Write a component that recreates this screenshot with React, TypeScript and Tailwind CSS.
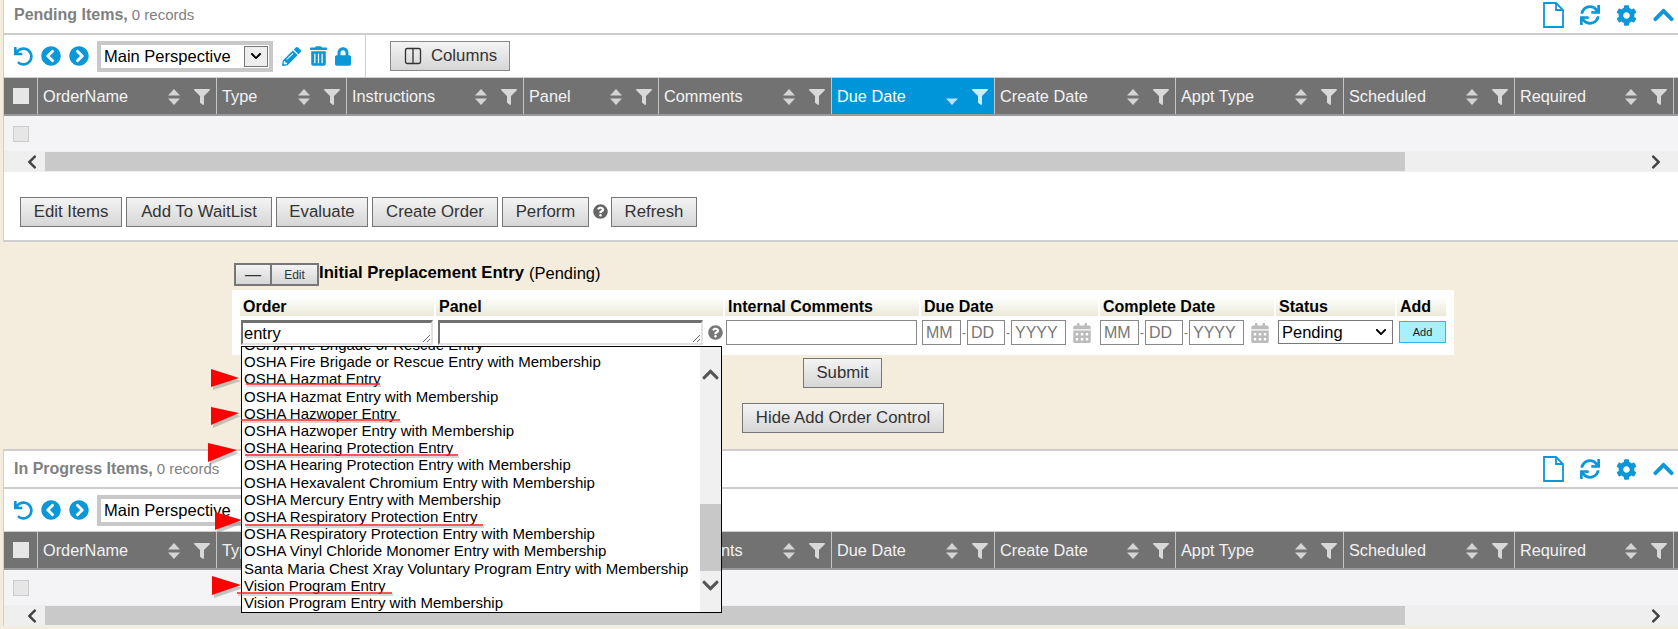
import { Columns2 } from 'lucide-react'
import {
  FaCalendarAlt,
  FaChevronCircleLeft,
  FaChevronCircleRight,
  FaChevronDown,
  FaChevronLeft,
  FaChevronRight,
  FaChevronUp,
  FaCog,
  FaFilter,
  FaLock,
  FaPencilAlt,
  FaQuestionCircle,
  FaSync,
  FaTrashAlt,
  FaUndo,
} from 'react-icons/fa'

const btn = 'h-[30px] border border-[#777] bg-gradient-to-b from-[#f4f4f4] to-[#d6d6d6] text-[16.8px] text-[#333] whitespace-nowrap flex items-center justify-center'

const columns = [
  { name: 'OrderName', w: 'w-[179px]' },
  { name: 'Type', w: 'w-[130px]' },
  { name: 'Instructions', w: 'w-[177px]' },
  { name: 'Panel', w: 'w-[135px]' },
  { name: 'Comments', w: 'w-[173px]' },
  { name: 'Due Date', w: 'w-[163px]' },
  { name: 'Create Date', w: 'w-[181px]' },
  { name: 'Appt Type', w: 'w-[168px]' },
  { name: 'Scheduled', w: 'w-[171px]' },
  { name: 'Required', w: 'w-[159px]' },
]

const options = [
  'OSHA Fire Brigade or Rescue Entry',
  'OSHA Fire Brigade or Rescue Entry with Membership',
  'OSHA Hazmat Entry',
  'OSHA Hazmat Entry with Membership',
  'OSHA Hazwoper Entry',
  'OSHA Hazwoper Entry with Membership',
  'OSHA Hearing Protection Entry',
  'OSHA Hearing Protection Entry with Membership',
  'OSHA Hexavalent Chromium Entry with Membership',
  'OSHA Mercury Entry with Membership',
  'OSHA Respiratory Protection Entry',
  'OSHA Respiratory Protection Entry with Membership',
  'OSHA Vinyl Chloride Monomer Entry with Membership',
  'Santa Maria Chest Xray Voluntary Program Entry with Membership',
  'Vision Program Entry',
  'Vision Program Entry with Membership',
]

function SortIcon({ active }: { active: boolean }) {
  return (
    <svg viewBox="0 0 12 16" className="w-3 h-4 shrink-0">
      {!active && <path d="M6 0 L12 6.5 H0 Z" fill="#d4d4d4" />}
      <path d="M0 9.5 H12 L6 16 Z" fill={active ? '#b8e4f8' : '#d4d4d4'} />
    </svg>
  )
}

function DocIcon() {
  return (
    <svg viewBox="0 0 21 26" className="w-[21px] h-[26px]" fill="none" stroke="currentColor" strokeWidth="1.8">
      <path d="M1 1 H13 L20 8 V25 H1 Z" />
      <path d="M13 1 V8 H20" />
    </svg>
  )
}

function HeaderCell({ name, w, active }: { name: string; w: string; active: boolean }) {
  return (
    <div className={`${w} shrink-0 h-full flex items-center pl-[5px] pr-[6px] pt-[1px] border-r border-[#c4c4c4] text-[16.3px] ${active ? 'bg-[#0095d9] text-white' : 'text-[#f2f2f2]'}`}>
      <span className="whitespace-nowrap">{name}</span>
      <span className="ml-auto flex items-center gap-[14px]">
        <SortIcon active={active} />
        <FaFilter className={`w-4 h-4 ${active ? 'text-[#c8eefc]' : 'text-[#d8d8d8]'}`} />
      </span>
    </div>
  )
}

function Grid({ activeDue, titleClass, children }: { activeDue: boolean; titleClass: string; children: React.ReactNode }) {
  return (
    <section className="ml-[3px] bg-white border-l border-[#cfcfcf]">
      <div className={`${titleClass} flex items-center pl-[10px] pr-[4px] border-b-2 border-[#cdcdcd]`}>
        {children}
        <div className="ml-auto flex items-center gap-[16px] text-[#0b97d8]">
          <DocIcon />
          <FaSync className="w-[20px] h-[20px]" />
          <FaCog className="w-[21px] h-[21px]" />
          <FaChevronUp className="w-[21px] h-[24px]" />
        </div>
      </div>
      <div className="h-[42px] flex items-center">
        <div className="h-full w-[362px] flex items-center pl-[10px] border-r border-[#cdcdcd] text-[#0b97d8]">
          <FaUndo className="w-[19px] h-[19px] shrink-0" />
          <FaChevronCircleLeft className="w-5 h-5 ml-[8px] shrink-0" />
          <FaChevronCircleRight className="w-5 h-5 ml-[8px] shrink-0" />
          <div className="w-[176px] h-[31px] ml-[8px] shrink-0 border-[4px] border-[#c8c8c8] flex items-center pl-[3px] pr-[1px] text-[16.5px] text-black">
            <span className="whitespace-nowrap">Main Perspective</span>
            <span className="ml-auto w-[24px] h-[21px] border border-[#777] bg-[#eee] flex items-center justify-center">
              <FaChevronDown className="w-3 h-3" />
            </span>
          </div>
          <FaPencilAlt className="w-[19px] h-[19px] ml-[9px] shrink-0" />
          <FaTrashAlt className="w-[17px] h-[20px] ml-[9px] shrink-0" />
          <FaLock className="w-[16px] h-[19px] ml-[8px] shrink-0" />
        </div>
        <div className={`${btn} ml-[24px] w-[120px] gap-2 border-[#888] text-[16.5px]`}>
          <Columns2 className="w-5 h-5 text-[#333]" strokeWidth={1.6} />
          Columns
        </div>
      </div>
      <div className="h-[39px] flex bg-[#727272] border-t border-[#cdcdcd] border-b-2 border-b-[#9a9a9a] overflow-hidden">
        <div className="w-[34px] shrink-0 h-full border-r border-[#c4c4c4] flex items-center justify-center">
          <div className="w-4 h-4 bg-[#e6e6e6]" />
        </div>
        {columns.map((c) => (
          <HeaderCell key={c.name} name={c.name} w={c.w} active={activeDue && c.name === 'Due Date'} />
        ))}
      </div>
      <div className="h-[35px] bg-[#f4f4f6] flex items-center pl-[9px]">
        <div className="w-4 h-4 bg-[#e6e6e6] border border-[#ccc]" />
      </div>
      <div className="h-[21px] bg-[#efefef] flex items-center">
        <div className="w-[41px] flex justify-end pr-[6px]">
          <FaChevronLeft className="w-[14px] h-4 text-[#444]" />
        </div>
        <div className="w-[1360px] h-[19px] bg-[#c9c9c9]" />
        <div className="flex-1 flex justify-end pr-[15px]">
          <FaChevronRight className="w-[14px] h-4 text-[#444]" />
        </div>
      </div>
    </section>
  )
}

function DateParts() {
  return (
    <div className="flex items-center text-[#777] text-[12px]">
      <input placeholder="MM" className="w-[39px] h-[25px] pl-[3px] border border-[#888] text-[16px] placeholder:text-[#777] bg-white" />
      <span className="w-[6px] text-center">-</span>
      <input placeholder="DD" className="w-[38px] h-[25px] pl-[3px] border border-[#888] text-[16px] placeholder:text-[#777] bg-white" />
      <span className="w-[6px] text-center">-</span>
      <input placeholder="YYYY" className="w-[55px] h-[25px] pl-[3px] border border-[#888] text-[16px] placeholder:text-[#777] bg-white" />
      <FaCalendarAlt className="w-[18px] h-[20px] ml-[7px] text-[#bcbcbc]" />
    </div>
  )
}

function Th({ w, label }: { w: string; label: string }) {
  return (
    <div className={`${w} h-[19px] px-[3px] flex items-center bg-gradient-to-b from-white to-[#ebe9d8] font-bold text-[16px] text-black whitespace-nowrap`}>
      {label}
    </div>
  )
}

export default function App() {
  return (
    <div className="relative w-[1678px] h-[629px] overflow-hidden bg-[#f4eddd] font-['Liberation_Sans',Arial,sans-serif]">
      <Grid activeDue titleClass="h-[35px] pb-[3px]">
        <span className="font-bold text-[16px] text-[#808080]">Pending Items,</span>
        <span className="ml-[4px] text-[15px] text-[#808080]">0 records</span>
      </Grid>

      <div className="ml-[3px] h-[70px] bg-white border-l border-b-2 border-[#cfcfcf] pl-[16px] pt-[25px] flex items-start gap-[4px]">
        <div className={`${btn} w-[102px]`}>Edit Items</div>
        <div className={`${btn} w-[146px]`}>Add To WaitList</div>
        <div className={`${btn} w-[92px]`}>Evaluate</div>
        <div className={`${btn} w-[126px]`}>Create Order</div>
        <div className={`${btn} w-[87px]`}>Perform</div>
        <FaQuestionCircle className="w-[15px] h-[15px] mt-[7px] text-[#666]" />
        <div className={`${btn} w-[86px] -ml-[1px]`}>Refresh</div>
      </div>

      <div className="h-[207px] pl-[232px] pt-[21px]">
        <div className="flex items-center pl-[2px] h-[23px]">
          <div className="h-full w-[38px] border-2 border-[#777] bg-gradient-to-b from-[#f4f4f4] to-[#d6d6d6] flex items-center justify-center text-[#333]">—</div>
          <div className="h-full w-[47px] border-2 border-l-0 border-[#777] bg-gradient-to-b from-[#f4f4f4] to-[#d6d6d6] flex items-center justify-center text-[12px] text-[#333]">Edit</div>
          <span className="-mt-[3px] text-[16.7px] text-black font-bold">Initial Preplacement Entry</span>
          <span className="-mt-[3px] ml-[5px] text-[16.5px] text-black">(Pending)</span>
        </div>

        <div className="mt-[4px] w-[1222px] h-[65px] bg-white pl-[8px] pt-[7px]">
          <div className="flex gap-[2px]">
            <Th w="w-[194px]" label="Order" />
            <Th w="w-[287px]" label="Panel" />
            <Th w="w-[194px]" label="Internal Comments" />
            <Th w="w-[177px]" label="Due Date" />
            <Th w="w-[174px]" label="Complete Date" />
            <Th w="w-[119px]" label="Status" />
            <Th w="w-[49px]" label="Add" />
          </div>
          <div className="mt-[4px] flex items-start">
            <textarea
              readOnly
              defaultValue="entry"
              className="w-[192px] h-[25px] ml-[1px] pl-[1px] border-2 border-t-[3px] border-[#707070] border-r-[#e2e2e2] border-b-[#e2e2e2] text-[16.5px] leading-[20px] text-black overflow-hidden"
            />
            <textarea
              readOnly
              className="w-[265px] h-[25px] ml-[5px] border-2 border-t-[3px] border-[#707070] border-r-[#e2e2e2] border-b-[#e2e2e2] overflow-hidden"
            />
            <FaQuestionCircle className="w-[15px] h-[15px] ml-[5px] mt-[5px] text-[#777]" />
            <input className="w-[191px] h-[25px] ml-[3px] border border-[#888] bg-white" />
            <div className="ml-[5px]"><DateParts /></div>
            <div className="ml-[9px]"><DateParts /></div>
            <div className="w-[115px] h-[24px] ml-[9px] border border-[#777] flex items-center pl-[3px] pr-[5px] text-[16.5px] text-black">
              Pending
              <FaChevronDown className="ml-auto w-3 h-3" />
            </div>
            <div className="w-[47px] h-[22px] ml-[6px] mt-[1px] border border-[#3db0e8] bg-[#a6f0ff] flex items-center justify-center text-[11px] text-[#222]">Add</div>
          </div>
        </div>

        <div className={`${btn} ml-[571px] mt-[3px] w-[79px]`}>Submit</div>
        <div className={`${btn} ml-[510px] mt-[15px] w-[202px]`}>Hide Add Order Control</div>
      </div>

      <Grid activeDue={false} titleClass="h-[40px] border-t-2 border-t-[#cdcdcd]">
        <span className="font-bold text-[16px] text-[#808080]">In Progress Items,</span>
        <span className="ml-[4px] text-[15px] text-[#808080]">0 records</span>
      </Grid>

      {/* autocomplete list sits over the panels */}
      <div className="absolute left-[241px] top-[346px] w-[481px] h-[267px] bg-white border border-black overflow-hidden">
        <ul className="-mt-[11px] pl-[2px] text-[15px] leading-[17.2px] text-black">
          {options.map((o) => (
            <li key={o} className="whitespace-nowrap">{o}</li>
          ))}
        </ul>
        <div className="absolute right-0 top-0 bottom-0 w-[21px] bg-[#f0f0f0]">
          <FaChevronUp className="absolute left-[2px] top-[18px] w-[17px] h-[19px] text-[#555]" />
          <div className="absolute left-0 right-0 top-[157px] h-[67px] bg-[#c8c8c8]" />
          <FaChevronDown className="absolute left-[2px] top-[229px] w-[17px] h-[19px] text-[#555]" />
        </div>
      </div>

      {/* hand-drawn annotations */}
      <svg className="absolute left-0 top-0 w-[1678px] h-[629px] pointer-events-none" viewBox="0 0 1678 629">
        <g fill="#8a8a8a" opacity="0.45" stroke="#8a8a8a">
          <polygon points="213,372 241,381 213,390" strokeWidth="0" />
          <polygon points="213,410 241,416 213,428" strokeWidth="0" />
          <polygon points="210,446 239,453 210,465" strokeWidth="0" />
          <polygon points="217,515 244,523 217,533" strokeWidth="0" />
          <polygon points="214,579 243,588 214,598" strokeWidth="0" />
          <path d="M247 386 L381 386 M242 422 L401 422 M246 457 L459 457 M246 527 L484 527 M238 595 L393 595" fill="none" strokeWidth="1.5" />
        </g>
        <g fill="#ff0000">
          <polygon points="211,369 239,378 211,387" />
          <polygon points="211,407 239,413 211,425" />
          <polygon points="208,443 237,450 208,462" />
          <polygon points="215,512 242,520 215,530" />
          <polygon points="212,576 241,585 212,595" />
        </g>
        <path
          d="M246 384 L380 384 M241 420 L400 420 M245 455 L458 455 M245 525 L483 525 M237 593 L392 593"
          fill="none"
          stroke="#ff2020"
          strokeWidth="1.5"
        />
      </svg>
    </div>
  )
}
